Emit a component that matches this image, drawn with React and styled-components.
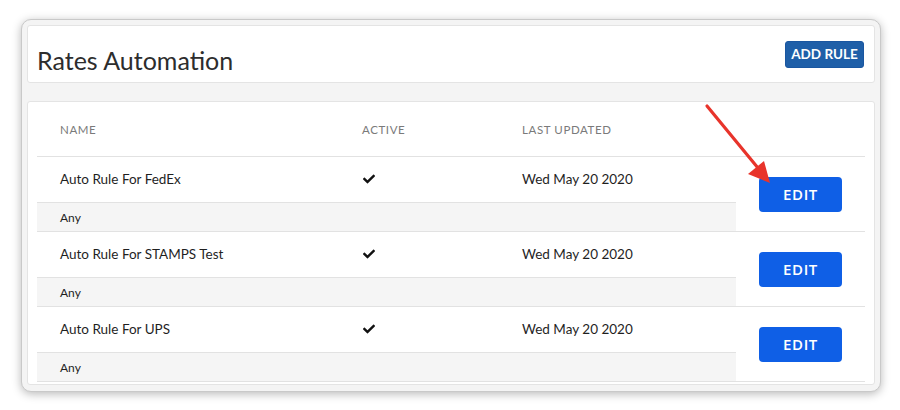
import React from "react";
import styled, { createGlobalStyle } from "styled-components";
import { FaCheck } from "react-icons/fa";

const Global = createGlobalStyle`
  html, body { margin: 0; padding: 0; background: #ffffff; }
  body { font-family: Lato, "Open Sans", sans-serif; -webkit-font-smoothing: antialiased; }
  * { box-sizing: border-box; }
`;

const Stage = styled.div`
  position: relative;
  width: 900px;
  height: 410px;
  padding: 19px 0 0 21px;
`;

const Frame = styled.div`
  width: 860px;
  background: #f4f4f4;
  border: 1px solid #c9c9c9;
  border-radius: 10px;
  box-shadow: 0 2px 10px rgba(0, 0, 0, 0.28);
  padding: 5px 5px 6px 5px;
  display: flex;
  flex-direction: column;
  gap: 18px;
`;

const Card = styled.div`
  background: #ffffff;
  border: 1px solid #e4e4e4;
  border-radius: 3px;
`;

const HeaderCard = styled(Card)`
  height: 58px;
  display: flex;
  align-items: center;
  justify-content: space-between;
  padding: 0 10px 0 9px;
`;

const Title = styled.h1`
  margin: 0;
  padding-top: 12px;
  font-family: Lato, sans-serif;
  font-weight: 400;
  font-size: 25px;
  color: #2d2d2d;
`;

const AddButton = styled.button`
  height: 27px;
  width: 79px;
  border: 1px solid #1a56a0;
  border-radius: 3px;
  background: #1f5fa8;
  color: #ffffff;
  font-family: Lato, sans-serif;
  font-weight: 700;
  font-size: 13.5px;
  padding: 0;
`;

const TableCard = styled(Card)`
  padding: 0 9px 2px 9px;
`;

const Cols = `302px 160px 237px 1fr`;

const HeadRow = styled.div`
  display: grid;
  grid-template-columns: ${Cols};
  height: 55px;
  align-items: center;
  border-bottom: 1px solid #e2e2e2;
`;

const HeadCell = styled.div`
  padding-left: 23px;
  font-family: Lato, sans-serif;
  font-size: 11.5px;
  letter-spacing: 0.6px;
  color: #7a7a7a;
  text-transform: uppercase;
`;

const Group = styled.div`
  display: grid;
  grid-template-columns: ${Cols};
  grid-template-rows: 46px 28px;
  border-bottom: 1px solid #e2e2e2;
`;

const Cell = styled.div`
  display: flex;
  align-items: center;
  padding-left: 23px;
  padding-bottom: 1px;
  border-bottom: 1px solid #e2e2e2;
  font-family: Lato, sans-serif;
  font-size: 13.5px;
  color: #1f1f1f;
`;

const SubCell = styled.div`
  grid-column: 1 / 4;
  display: flex;
  align-items: center;
  padding-left: 23px;
  background: #f5f5f5;
  font-family: Lato, sans-serif;
  font-size: 12px;
  color: #1f1f1f;
`;

const EditCell = styled.div`
  grid-column: 4;
  grid-row: 1 / 3;
  display: flex;
  align-items: center;
  justify-content: center;
`;

const EditButton = styled.button`
  width: 83px;
  height: 35px;
  border: none;
  border-radius: 4px;
  background: #0f5fe6;
  color: #ffffff;
  font-family: "Open Sans", Lato, sans-serif;
  font-weight: 600;
  font-size: 15px;
  letter-spacing: 0.6px;
  padding: 0;
`;

const Check = styled(FaCheck)`
  width: 12px;
  height: 12px;
  color: #111;
  margin-left: 1px;
`;

const Arrow = styled.svg`
  position: absolute;
  left: 700px;
  top: 100px;
  width: 80px;
  height: 90px;
  overflow: visible;
`;

const rules = [
  "Auto Rule For FedEx",
  "Auto Rule For STAMPS Test",
  "Auto Rule For UPS",
];

export default function App() {
  return (
    <>
      <Global />
      <Stage>
        <Frame>
          <HeaderCard>
            <Title>Rates Automation</Title>
            <AddButton>ADD RULE</AddButton>
          </HeaderCard>
          <TableCard>
            <HeadRow>
              <HeadCell>Name</HeadCell>
              <HeadCell>Active</HeadCell>
              <HeadCell>Last Updated</HeadCell>
              <HeadCell />
            </HeadRow>
            {rules.map((name) => (
              <Group key={name}>
                <Cell>{name}</Cell>
                <Cell>
                  <Check />
                </Cell>
                <Cell>Wed May 20 2020</Cell>
                <EditCell>
                  <EditButton>EDIT</EditButton>
                </EditCell>
                <SubCell>Any</SubCell>
              </Group>
            ))}
          </TableCard>
        </Frame>
        <Arrow viewBox="0 0 80 90">
          <line x1="7" y1="6" x2="58" y2="68" stroke="#e8342b" strokeWidth="3.2" strokeLinecap="round" />
          <polygon points="70,83 48,74 64,61" fill="#e8342b" />
        </Arrow>
      </Stage>
    </>
  );
}
